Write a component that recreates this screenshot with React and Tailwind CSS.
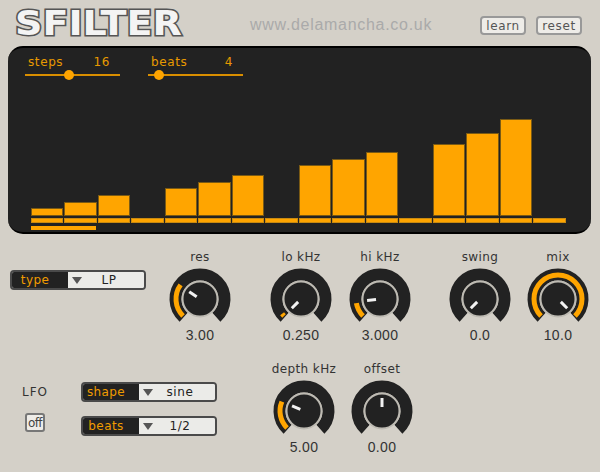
import React from 'react';

const cols = [8, 14, 21, 0, 28, 34, 41, 0, 51, 57, 64, 0, 72, 83, 97, 0];

function arc(r, a0, a1) {
  const rad = (a) => ((a - 90) * Math.PI) / 180;
  const x0 = 32 + r * Math.cos(rad(a0));
  const y0 = 32 + r * Math.sin(rad(a0));
  const x1 = 32 + r * Math.cos(rad(a1));
  const y1 = 32 + r * Math.sin(rad(a1));
  return `M${x0} ${y0}A${r} ${r} 0 ${a1 - a0 > 180 ? 1 : 0} 1 ${x1} ${y1}`;
}

// angle = pointer direction in degrees from 12 o'clock, arcEnd = where the orange stops
function Knob({ label, value, angle, arcEnd, className = '' }) {
  const a = ((angle - 90) * Math.PI) / 180;
  return (
    <div className={`flex w-[80px] flex-col items-center ${className}`}>
      <div className="h-[16px] text-[12px] leading-[16px] tracking-[0.4px] text-[#333] font-['DejaVu_Sans',sans-serif]">
        {label}
      </div>
      <svg width="64" height="64" viewBox="0 0 64 64" className="mt-[2px]">
        <path d={arc(24.5, -138, 138)} fill="none" stroke="#222" strokeWidth="12" />
        {arcEnd !== undefined && (
          <path d={arc(24, -135, arcEnd)} fill="none" stroke="#ffa500" strokeWidth="5" />
        )}
        <circle cx="32" cy="32" r="17.5" fill="#222" stroke="#bdbab2" strokeWidth="2" />
        <line
          x1={32 + 4 * Math.cos(a)}
          y1={32 + 4 * Math.sin(a)}
          x2={32 + 13 * Math.cos(a)}
          y2={32 + 13 * Math.sin(a)}
          stroke="#f2f2f2"
          strokeWidth="3"
        />
      </svg>
      <div className="mt-[-3px] h-[14px] text-[14px] leading-[14px] tracking-[0.3px] text-[#333] font-['Liberation_Sans',sans-serif]">
        {value}
      </div>
    </div>
  );
}

function Select({ label, value }) {
  return (
    <div className="flex h-[20px] w-[136px] overflow-hidden rounded-[4px] border-2 border-[#4a4a4a] bg-[#ebebe8]">
      <div className="flex w-[56px] items-center justify-center bg-[#222] pr-[10px] text-[12px] tracking-[0.4px] text-[#f09c00] font-['DejaVu_Sans',sans-serif]">
        {label}
      </div>
      <div className="flex flex-1 items-center bg-[#ebebe8]">
        <svg width="10" height="7" viewBox="0 0 10 7" className="ml-[4px]">
          <path d="M0 0H10L5 7Z" fill="#555" />
        </svg>
        <div className="flex-1 pr-[8px] text-center text-[12px] tracking-[0.6px] text-[#222] font-['DejaVu_Sans',sans-serif]">
          {value}
        </div>
      </div>
    </div>
  );
}

function Slider({ label, value, thumb }) {
  return (
    <div className="w-[95px]">
      <div className="flex h-[16px] items-center justify-between pl-[3px] pr-[10px] text-[12px] tracking-[0.6px] text-[#e89a00] font-['DejaVu_Sans',sans-serif]">
        <span>{label}</span>
        <span>{value}</span>
      </div>
      <div className="relative mt-[4px] h-[2px] bg-[#d98e00]">
        <div className="absolute top-[-4px] h-[10px] w-[10px] rounded-full bg-[#ffa500]" style={{ left: thumb }} />
      </div>
    </div>
  );
}

function Btn({ children }) {
  return (
    <div className="flex h-[19px] w-[46px] items-center justify-center rounded-[4px] border-2 border-[#999] bg-[#eeece8] text-[12px] tracking-[0.6px] text-[#555] font-['DejaVu_Sans',sans-serif]">
      {children}
    </div>
  );
}

export default function App() {
  return (
    <div className="h-[472px] w-[600px] overflow-hidden bg-[#d4d0c8]">
      <div className="flex h-[46px] items-start">
        <div className="ml-[15px] mt-[3px] w-[178px] origin-left scale-x-[1.12] text-[34px] font-bold leading-[40px] tracking-[0px] text-[#f4f4f4] font-['DejaVu_Sans',sans-serif] [-webkit-text-stroke:3px_#555] [paint-order:stroke_fill]">
          SFILTER
        </div>
        <div className="ml-[57px] mt-[15px] text-[16px] leading-[20px] tracking-[0.7px] text-[#aaa] font-['Liberation_Sans',sans-serif]">
          www.delamancha.co.uk
        </div>
        <div className="ml-auto mr-[18px] mt-[16px] flex gap-[10px]">
          <Btn>learn</Btn>
          <Btn>reset</Btn>
        </div>
      </div>

      <div className="ml-[8px] h-[188px] w-[583px] rounded-[15px] border-t-2 border-b-2 border-black bg-[#222]">
        <div className="ml-[17px] flex gap-[28px] pt-[6px]">
          <Slider label="steps" value="16" thumb={39} />
          <Slider label="beats" value="4" thumb={6} />
        </div>
        <div className="ml-[23px] mt-[6px] flex">
          {cols.map((h, i) => (
            <div key={i} className="flex h-[141px] w-[33.47px] flex-col justify-end pr-[1px]">
              {h > 0 && <div className="bg-[#ffa500] outline outline-1 -outline-offset-1 outline-[#7a5a14]" style={{ height: h }} />}
              <div className="mt-[2px] h-[5px] bg-[#ffa500] outline outline-1 -outline-offset-1 outline-[#c98a10]" />
            </div>
          ))}
        </div>
        <div className="ml-[23px] mt-[3px] h-[4px] w-[65px] bg-[#ffa500]" />
      </div>

      <div className="mt-[15px] flex">
        <div className="ml-[10px] mt-[21px] w-[110px]">
          <Select label="type" value="LP" />
        </div>
        <Knob className="ml-[40px]" label="res" value="3.00" angle={-56} arcEnd={-54} />
        <Knob className="ml-[21px]" label="lo kHz" value="0.250" angle={-135} arcEnd={-128} />
        <Knob className="ml-[-1px]" label="hi kHz" value="3.000" angle={-97} arcEnd={-100} />
        <Knob className="ml-[20px]" label="swing" value="0.0" angle={-135} />
        <Knob className="ml-[-2px]" label="mix" value="10.0" angle={135} arcEnd={135} />
      </div>

      <div className="mt-[19px] flex">
        <div className="ml-[10px] flex w-[71px] flex-col items-center pr-[21px]">
          <div className="mt-[22px] text-[12px] tracking-[1px] text-[#333] font-['DejaVu_Sans',sans-serif]">LFO</div>
          <div className="mt-[12px] flex h-[19px] w-[20px] items-center justify-center rounded-[3px] border-2 border-[#777] bg-[#eeece8] text-[12px] tracking-[-0.6px] text-[#444] font-['DejaVu_Sans',sans-serif]">
            off
          </div>
        </div>
        <div className="mt-[21px] flex flex-col gap-[14px]">
          <Select label="shape" value="sine" />
          <Select label="beats" value="1/2" />
        </div>
        <Knob className="ml-[47px]" label="depth kHz" value="5.00" angle={-67} arcEnd={-67} />
        <Knob className="ml-[-2px]" label="offset" value="0.00" angle={0} />
      </div>
    </div>
  );
}
